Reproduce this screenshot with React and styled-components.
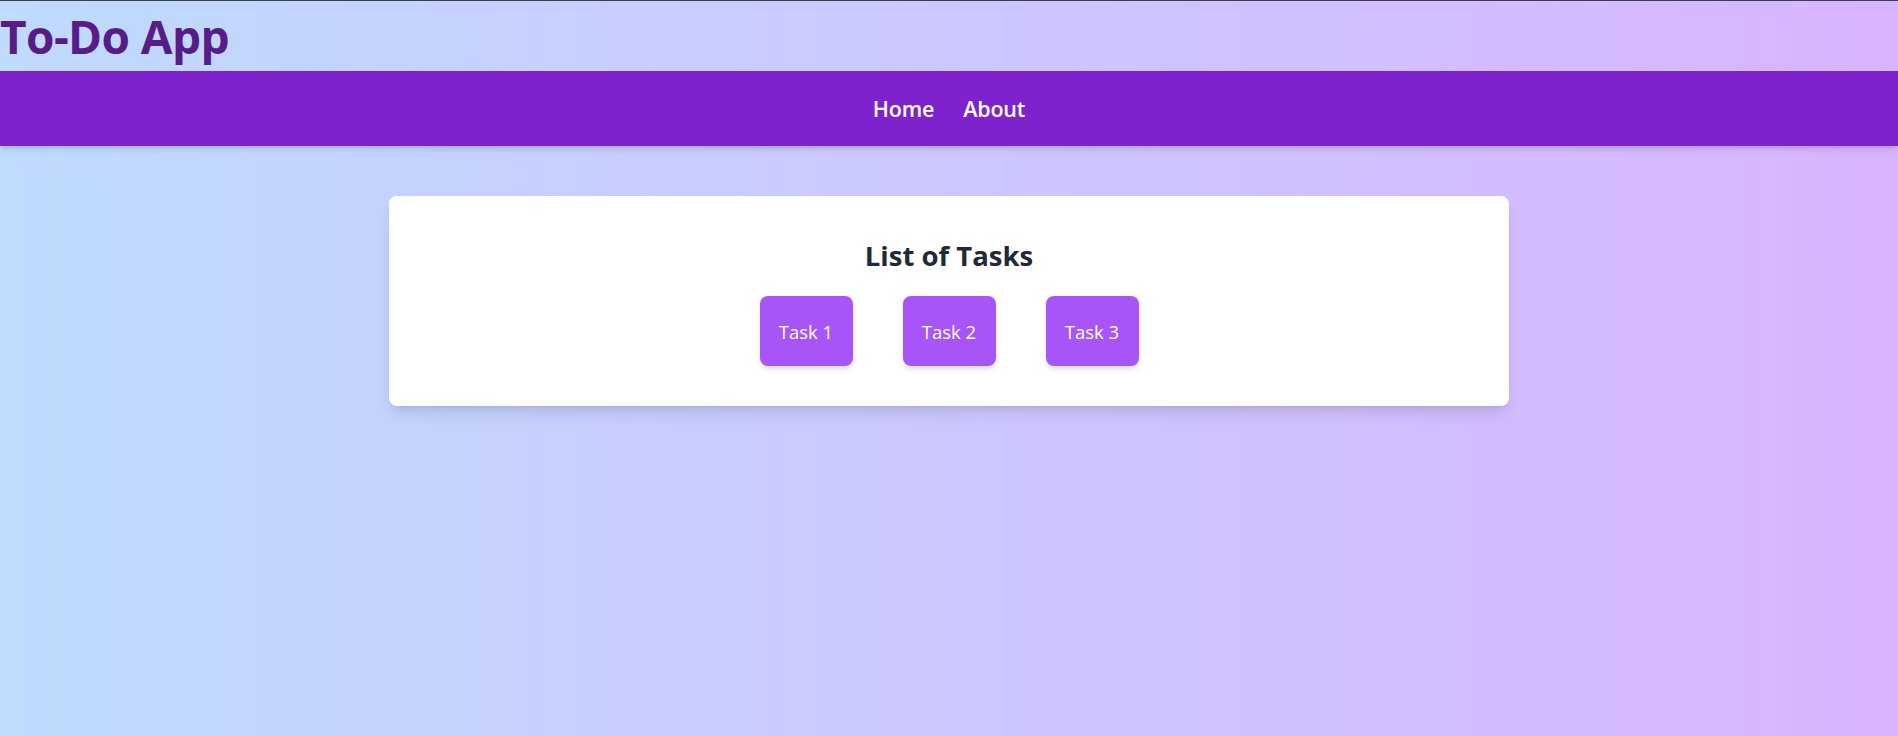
import React from "react";
import styled, { createGlobalStyle } from "styled-components";

const GlobalStyle = createGlobalStyle`
  html, body { margin: 0; padding: 0; }
  body {
    font-family: "Open Sans", "Noto Sans", sans-serif;
    background: #c8cafd;
  }
  * { box-sizing: border-box; }
`;

const Page = styled.div`
  min-height: 100vh;
  border-top: 1px solid #3b3f4a;
  background: linear-gradient(to right, #bfdbfe, #d8b4fe);
  display: flex;
  flex-direction: column;
`;

const Header = styled.header`
  height: 70px;
  display: flex;
  align-items: flex-start;
`;

const Title = styled.h1`
  margin: 0;
  font-size: 46px;
  line-height: 70px;
  font-weight: 700;
  color: #581c87;
  letter-spacing: -0.6px;
`;

const NavBar = styled.nav`
  height: 75px;
  background: #7e22ce;
  box-shadow: 0 4px 6px -1px rgba(0, 0, 0, 0.12), 0 2px 4px -2px rgba(0, 0, 0, 0.1);
  display: flex;
  justify-content: center;
  align-items: center;
  gap: 29px;
  position: relative;
  z-index: 1;
`;

const NavLink = styled.a`
  color: #ffffff;
  font-size: 21.5px;
  font-weight: 600;
  text-decoration: none;
  line-height: 28px;
  letter-spacing: -0.2px;
  cursor: pointer;
`;

const Main = styled.main`
  display: flex;
  justify-content: center;
  padding-top: 50px;
`;

const Card = styled.section`
  width: 1120px;
  background: #ffffff;
  border-radius: 8px;
  box-shadow: 0 10px 15px -3px rgba(0, 0, 0, 0.1), 0 4px 6px -4px rgba(0, 0, 0, 0.1);
  padding: 42px 32px 40px;
  display: flex;
  flex-direction: column;
  align-items: center;
`;

const Heading = styled.h2`
  margin: 0 0 22px;
  font-size: 27.5px;
  line-height: 36px;
  font-weight: 700;
  color: #1f2937;
`;

const TaskRow = styled.div`
  display: flex;
  gap: 50px;
`;

const TaskButton = styled.button`
  width: 93px;
  height: 70px;
  border: none;
  border-radius: 8px;
  background: #a855f7;
  color: #ffffff;
  font-family: inherit;
  font-size: 18.5px;
  box-shadow: 0 4px 6px -1px rgba(0, 0, 0, 0.12), 0 2px 4px -2px rgba(0, 0, 0, 0.1);
  display: flex;
  align-items: center;
  justify-content: center;
  cursor: pointer;
`;

const tasks = ["Task 1", "Task 2", "Task 3"];

export default function App() {
  return (
    <>
      <GlobalStyle />
      <Page>
        <Header>
          <Title>To-Do App</Title>
        </Header>
        <NavBar>
          <NavLink>Home</NavLink>
          <NavLink>About</NavLink>
        </NavBar>
        <Main>
          <Card>
            <Heading>List of Tasks</Heading>
            <TaskRow>
              {tasks.map((t) => (
                <TaskButton key={t}>{t}</TaskButton>
              ))}
            </TaskRow>
          </Card>
        </Main>
      </Page>
    </>
  );
}
